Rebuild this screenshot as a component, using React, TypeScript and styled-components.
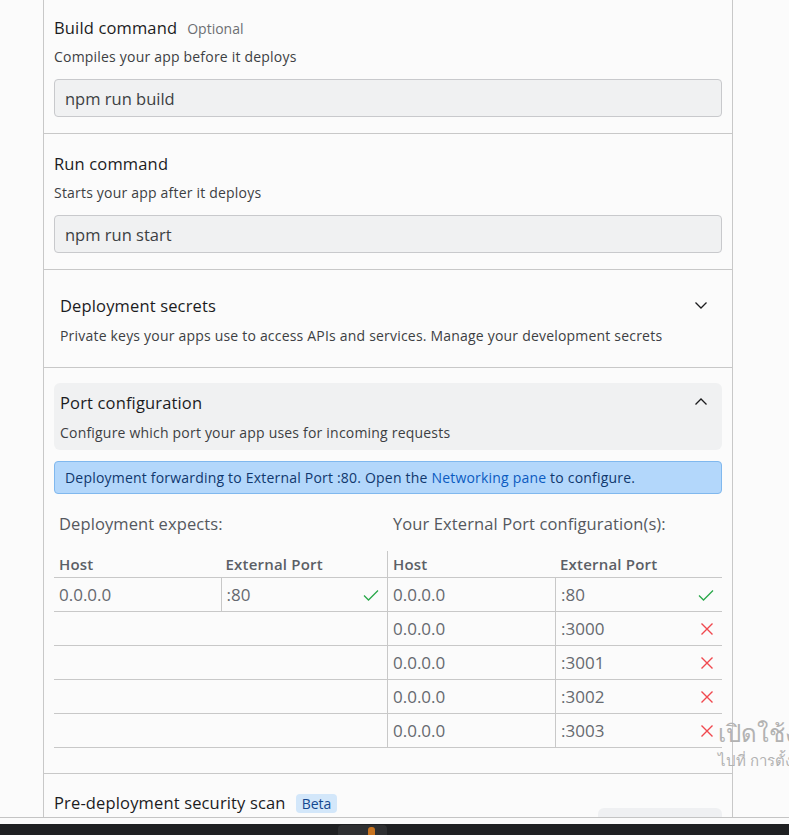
import styled, { createGlobalStyle } from "styled-components";

const GlobalStyle = createGlobalStyle`
  html, body {
    margin: 0;
    padding: 0;
    background: #fbfbfb;
    overflow: hidden;
  }
  body {
    font-family: "Open Sans", "Noto Sans", sans-serif;
    color: #1c1c1e;
  }
  * {
    box-sizing: border-box;
  }
`;

const Page = styled.div`
  position: relative;
  height: 835px;
  display: flex;
  flex-direction: column;
`;

const Viewport = styled.div`
  height: 818px;
  overflow: hidden;
  border-bottom: 1px solid #c4c4c4;
`;

const Panel = styled.div`
  margin-top: -2px;
  margin-left: 43px;
  width: 690px;
  border-left: 1px solid #c8c8c8;
  border-right: 1px solid #c8c8c8;
  min-height: 900px;
`;

const Section = styled.section<{ $pt?: number; $pb?: number }>`
  padding: ${(p) => p.$pt ?? 18}px 10px ${(p) => p.$pb ?? 16}px;
  border-bottom: 1px solid #c8c8c8;
`;

const TitleRow = styled.div`
  display: flex;
  align-items: center;
  height: 24px;
`;

const Title = styled.div`
  font-size: 16.5px;
  line-height: 24px;
  letter-spacing: 0.15px;
  color: #1c1c1e;
`;

const Optional = styled.span`
  margin-left: 10px;
  font-size: 14px;
  color: #6d6f73;
`;

const Description = styled.div<{ $mt?: number }>`
  margin-top: ${(p) => p.$mt ?? 7}px;
  font-size: 14px;
  line-height: 20px;
  letter-spacing: 0.2px;
  color: #3d3f43;
`;

const Input = styled.div`
  margin-top: 12px;
  height: 38px;
  display: flex;
  align-items: center;
  padding: 0 10px;
  background: #f0f1f2;
  border: 1px solid #c8c9cc;
  border-radius: 4px;
  font-size: 16.5px;
  color: #3d3f43;
`;

const Collapsible = styled.div<{ $open?: boolean }>`
  display: flex;
  align-items: flex-start;
  justify-content: space-between;
  padding: 8px 14px 7px 6px;
  border-radius: 6px;
  background: ${(p) => (p.$open ? "#f0f1f2" : "transparent")};
`;

const Chevron = styled.svg`
  margin-top: 4px;
  flex: none;
`;

const Banner = styled.div`
  margin-top: 11px;
  height: 33px;
  display: flex;
  align-items: center;
  padding: 0 10px;
  background: #b3d7fb;
  border: 1px solid #80b8ee;
  border-radius: 4px;
  font-size: 14px;
  letter-spacing: 0.2px;
  color: #10386e;
`;

const BannerLink = styled.span`
  color: #0b5bc1;
`;

const Columns = styled.div`
  display: grid;
  grid-template-columns: 333px 1fr;
`;

const ColumnHeading = styled.div<{ $inset: number }>`
  margin-top: 18px;
  margin-bottom: 15px;
  padding-left: ${(p) => p.$inset}px;
  font-size: 16.5px;
  line-height: 24px;
  letter-spacing: 0.1px;
  color: #55585e;
`;

const Table = styled.div<{ $bordered?: boolean }>`
  display: flex;
  flex-direction: column;
  border-left: ${(p) => (p.$bordered ? "1px solid #c8c8c8" : "none")};
`;

const Row = styled.div<{ $head?: boolean }>`
  display: grid;
  grid-template-columns: 1fr 1fr;
  height: ${(p) => (p.$head ? 27 : 34)}px;
  border-bottom: 1px solid #c8c8c8;
`;

const HeadCell = styled.div`
  display: flex;
  align-items: center;
  padding-left: 5px;
  font-size: 15px;
  font-weight: 600;
  letter-spacing: 0.2px;
  color: #5c5f66;
`;

const Cell = styled.div<{ $divided?: boolean }>`
  display: flex;
  align-items: center;
  justify-content: space-between;
  padding: 0 8px 0 5px;
  border-left: ${(p) => (p.$divided ? "1px solid #c8c8c8" : "none")};
  font-size: 17px;
  color: #66696f;
`;

const BetaBadge = styled.span`
  margin-left: 10px;
  height: 19px;
  display: inline-flex;
  align-items: center;
  padding: 0 6px;
  border-radius: 4px;
  background: #d3e7fa;
  color: #13488f;
  font-size: 14px;
`;

const ScanRow = styled.div`
  display: flex;
  justify-content: space-between;
  align-items: flex-start;
`;

const GhostButton = styled.div`
  margin-top: 17px;
  width: 124px;
  height: 36px;
  border-radius: 6px;
  background: #eff0f2;
`;

const Gap = styled.div`
  height: 6px;
`;

const Taskbar = styled.div`
  flex: 1;
  background: #1f2022;
  display: flex;
  padding-left: 338px;
  padding-top: 1px;
`;

const TaskbarTab = styled.div`
  width: 49px;
  border-radius: 4px 4px 0 0;
  background: #2e2f31;
  display: flex;
  justify-content: flex-end;
  padding-right: 12px;
`;

const TaskbarGlyph = styled.div`
  width: 7px;
  margin-top: 2px;
  border-radius: 3px 3px 0 0;
  background: #c7731f;
`;

const Watermark = styled.div`
  position: absolute;
  left: 718px;
  top: 716px;
  white-space: nowrap;
  color: #b2b2b2;
  font-family: "Noto Sans", "DejaVu Sans", sans-serif;
  pointer-events: none;
`;

const WatermarkTitle = styled.div`
  font-size: 24px;
  line-height: 34px;
`;

const WatermarkHint = styled.div`
  font-size: 15px;
  line-height: 20px;
`;

function ChevronIcon({ up }: { up?: boolean }) {
  return (
    <Chevron width="14" height="14" viewBox="0 0 14 14" fill="none">
      <path
        d={up ? "M1.5 9.5 L7 4 L12.5 9.5" : "M1.5 4.5 L7 10 L12.5 4.5"}
        stroke="#1c1c1e"
        strokeWidth="1.3"
      />
    </Chevron>
  );
}

function CheckIcon() {
  return (
    <svg width="16" height="12" viewBox="0 0 16 12" fill="none">
      <path d="M1 6.5 L5.5 11 L15 1.5" stroke="#2aa84a" strokeWidth="1.3" />
    </svg>
  );
}

function CrossIcon() {
  return (
    <svg width="14" height="14" viewBox="0 0 14 14" fill="none">
      <path d="M1.5 1.5 L12.5 12.5 M12.5 1.5 L1.5 12.5" stroke="#f0484e" strokeWidth="1.4" />
    </svg>
  );
}

const externalPorts = [
  { port: ":80", ok: true },
  { port: ":3000", ok: false },
  { port: ":3001", ok: false },
  { port: ":3002", ok: false },
  { port: ":3003", ok: false },
];

export default function App() {
  return (
    <Page>
      <GlobalStyle />
      <Viewport>
        <Panel>
          <Section>
            <TitleRow>
              <Title>Build command</Title>
              <Optional>Optional</Optional>
            </TitleRow>
            <Description>Compiles your app before it deploys</Description>
            <Input>npm run build</Input>
          </Section>

          <Section>
            <TitleRow>
              <Title>Run command</Title>
            </TitleRow>
            <Description>Starts your app after it deploys</Description>
            <Input>npm run start</Input>
          </Section>

          <Section $pt={16} $pb={14}>
            <Collapsible>
              <div>
                <Title>Deployment secrets</Title>
                <Description $mt={8}>
                  Private keys your apps use to access APIs and services. Manage your development secrets
                </Description>
              </div>
              <ChevronIcon />
            </Collapsible>
          </Section>

          <Section $pt={15} $pb={25}>
            <Collapsible $open>
              <div>
                <Title>Port configuration</Title>
                <Description $mt={8}>Configure which port your app uses for incoming requests</Description>
              </div>
              <ChevronIcon up />
            </Collapsible>
            <Banner>
              Deployment forwarding to External Port :80. Open the&nbsp;
              <BannerLink>Networking pane</BannerLink>&nbsp;to configure.
            </Banner>
            <Columns>
              <ColumnHeading $inset={5}>Deployment expects:</ColumnHeading>
              <ColumnHeading $inset={6}>Your External Port configuration(s):</ColumnHeading>
              <Table>
                <Row $head>
                  <HeadCell>Host</HeadCell>
                  <HeadCell>External Port</HeadCell>
                </Row>
                <Row>
                  <Cell>0.0.0.0</Cell>
                  <Cell $divided>
                    :80
                    <CheckIcon />
                  </Cell>
                </Row>
                {[0, 1, 2, 3].map((i) => (
                  <Row key={i} />
                ))}
              </Table>
              <Table $bordered>
                <Row $head>
                  <HeadCell>Host</HeadCell>
                  <HeadCell>External Port</HeadCell>
                </Row>
                {externalPorts.map((p) => (
                  <Row key={p.port}>
                    <Cell>0.0.0.0</Cell>
                    <Cell $divided>
                      {p.port}
                      {p.ok ? <CheckIcon /> : <CrossIcon />}
                    </Cell>
                  </Row>
                ))}
              </Table>
            </Columns>
          </Section>

          <Section $pt={17}>
            <ScanRow>
              <TitleRow>
                <Title>Pre-deployment security scan</Title>
                <BetaBadge>Beta</BetaBadge>
              </TitleRow>
              <GhostButton />
            </ScanRow>
          </Section>
        </Panel>
      </Viewport>
      <Gap />
      <Taskbar>
        <TaskbarTab>
          <TaskbarGlyph />
        </TaskbarTab>
      </Taskbar>
      <Watermark>
        <WatermarkTitle>เปิดใช้งาน Windows</WatermarkTitle>
        <WatermarkHint>ไปที่ การตั้งค่า เพื่อเปิดใช้งาน Windows</WatermarkHint>
      </Watermark>
    </Page>
  );
}
